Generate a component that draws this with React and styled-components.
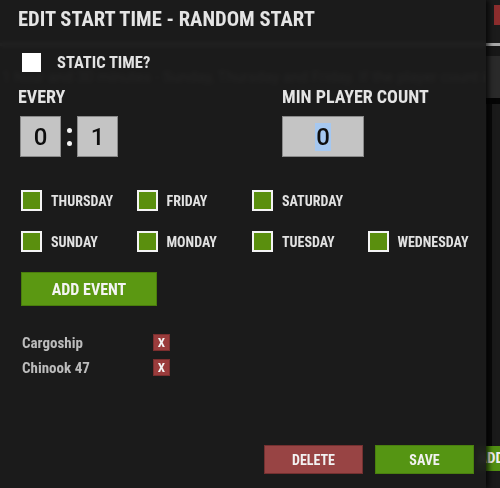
import React, { useState } from 'react';
import styled, { createGlobalStyle } from 'styled-components';

const GlobalStyle = createGlobalStyle`
    html, body {
        margin: 0;
        padding: 0;
        background: #151515;
    }
    * {
        box-sizing: border-box;
    }
`;

const FONT = `"Roboto Condensed", Roboto, "Liberation Sans", sans-serif`;

const DAY_ROWS = [
    ['THURSDAY', 'FRIDAY', 'SATURDAY'],
    ['SUNDAY', 'MONDAY', 'TUESDAY', 'WEDNESDAY'],
];

const EVENTS = ['Cargoship', 'Chinook 47'];

function App() {
    const [staticTime, setStaticTime] = useState(false);
    const [days, setDays] = useState(DAY_ROWS.flat());
    const [events, setEvents] = useState(EVENTS);

    const toggleDay = (day) => {
        setDays((prev) => (prev.includes(day) ? prev.filter((d) => d !== day) : [...prev, day]));
    };

    return (
        <Page>
            <GlobalStyle />
            <Backdrop>
                <BgTopBar>
                    <BgTab />
                </BgTopBar>
                <BgRule />
                <BgRow>
                    <BgText>1 hour and 30 minutes - Sunday, Thursday and Friday. If the player count is above 5</BgText>
                    <BgSide />
                </BgRow>
                <BgShadowBar />
                <BgFill />
                <BgFooter>
                    <BgButton>ADD</BgButton>
                </BgFooter>
            </Backdrop>

            <Modal>
                <Title>EDIT START TIME - RANDOM START</Title>

                <StaticRow onClick={() => setStaticTime(!staticTime)}>
                    <WhiteBox $checked={staticTime} />
                    <StaticLabel>STATIC TIME?</StaticLabel>
                </StaticRow>

                <Fields>
                    <Field>
                        <FieldLabel>EVERY</FieldLabel>
                        <TimeRow>
                            <TimeBox>0</TimeBox>
                            <Colon>
                                <Dot />
                                <Dot />
                            </Colon>
                            <TimeBox>1</TimeBox>
                        </TimeRow>
                    </Field>
                    <Field>
                        <FieldLabel>MIN PLAYER COUNT</FieldLabel>
                        <CountBox>
                            <Selected>0</Selected>
                        </CountBox>
                    </Field>
                </Fields>

                <DayGrid>
                    {DAY_ROWS.map((row) =>
                        row.map((day, i) => (
                            <DayItem key={day} $first={i === 0} onClick={() => toggleDay(day)}>
                                <DayBox $checked={days.includes(day)} />
                                <DayLabel>{day}</DayLabel>
                            </DayItem>
                        ))
                    )}
                </DayGrid>

                <AddButton>ADD EVENT</AddButton>

                <EventList>
                    {events.map((ev) => (
                        <React.Fragment key={ev}>
                            <EventName>{ev}</EventName>
                            <RemoveButton onClick={() => setEvents(events.filter((e) => e !== ev))}>X</RemoveButton>
                        </React.Fragment>
                    ))}
                </EventList>

                <Footer>
                    <ActionButton $variant="danger">DELETE</ActionButton>
                    <ActionButton>SAVE</ActionButton>
                </Footer>
            </Modal>
        </Page>
    );
}

export default App;

const Page = styled.div`
    position: relative;
    width: 500px;
    height: 488px;
    overflow: hidden;
    background: #171717;
    font-family: ${FONT};
`;

/* ---- page behind the dialog ---- */

const Backdrop = styled.div`
    display: flex;
    flex-direction: column;
    height: 100%;
`;

const BgTopBar = styled.div`
    height: 43px;
    display: flex;
    justify-content: flex-end;
    padding-top: 5px;
    background: #1b1b1b;
`;

const BgTab = styled.div`
    width: 6px;
    height: 20px;
    background: #8c2d2d;
`;

const BgRule = styled.div`
    height: 3px;
    background: #a9a9a9;
`;

const BgRow = styled.div`
    display: flex;
    align-items: center;
    height: 52px;
    padding-top: 9px;
`;

const BgText = styled.div`
    flex: 1;
    padding-left: 2px;
    color: #b4b4b4;
    font-family: Roboto, sans-serif;
    font-size: 15px;
    white-space: nowrap;
    overflow: hidden;
`;

const BgSide = styled.div`
    width: 14px;
    height: 42px;
    background: #2a2a2a;
`;

const BgShadowBar = styled.div`
    height: 6px;
    margin-left: 486px;
    background: #050505;
`;

const BgFill = styled.div`
    flex: 1;
    margin-left: 487px;
    border-left: 5px solid #090909;
    background: #1a1a1a;
`;

const BgFooter = styled.div`
    display: flex;
    justify-content: flex-end;
    height: 42px;
    background: #1a1a1a;
`;

const BgButton = styled.div`
    width: 40px;
    height: 25px;
    margin-right: -16px;
    padding-left: 2px;
    background: #518f12;
    color: #f0f0f0;
    font-size: 15px;
    font-weight: 700;
    line-height: 25px;
`;

/* ---- dialog ---- */

const Modal = styled.div`
    position: absolute;
    top: 0;
    left: 0;
    width: 486px;
    height: 488px;
    display: flex;
    flex-direction: column;
    padding: 7px 12px 14px 18px;
    background: rgba(27, 27, 27, 0.95);
    backdrop-filter: blur(2px);
    box-shadow: 3px 0 5px rgba(0, 0, 0, 0.7);
`;

const Title = styled.h1`
    margin: 0;
    color: #e4e4e4;
    font-size: 20.6px;
    font-weight: 700;
    line-height: 24px;
    white-space: nowrap;
`;

const StaticRow = styled.div`
    display: flex;
    align-items: center;
    gap: 16px;
    height: 19px;
    margin: 22px 0 0 4px;
    cursor: pointer;
`;

const WhiteBox = styled.div`
    width: 19px;
    height: 19px;
    background: ${(p) => (p.$checked ? '#5b9312' : '#ffffff')};
    border: 2px solid #ffffff;
`;

const StaticLabel = styled.span`
    color: #e2e2e2;
    font-size: 16.5px;
    font-weight: 700;
    line-height: 19px;
    white-space: nowrap;
`;

const Fields = styled.div`
    display: grid;
    grid-template-columns: 264px 1fr;
    margin-top: 14px;
`;

const Field = styled.div`
    display: flex;
    flex-direction: column;
    gap: 8px;
`;

const FieldLabel = styled.div`
    color: #e4e4e4;
    font-size: 18px;
    font-weight: 700;
    line-height: 22px;
`;

const TimeRow = styled.div`
    display: flex;
    align-items: center;
    margin-left: 2px;
`;

const TimeBox = styled.div`
    width: 41px;
    height: 41px;
    display: flex;
    align-items: center;
    justify-content: center;
    background: #c4c4c4;
    border: 1px solid #8a8a8a;
    color: #0e0e0e;
    font-family: Roboto, sans-serif;
    font-size: 24px;
    font-weight: 500;
`;

const Colon = styled.div`
    width: 16px;
    display: flex;
    flex-direction: column;
    align-items: center;
    gap: 8px;
`;

const Dot = styled.div`
    width: 5px;
    height: 5px;
    border-radius: 50%;
    background: #f2f2f2;
`;

const CountBox = styled(TimeBox)`
    width: 82px;
`;

const Selected = styled.span`
    padding: 0 1px;
    background: #a6c8f0;
    line-height: 28px;
`;

const DayGrid = styled.div`
    display: grid;
    grid-template-columns: repeat(4, 115.5px);
    row-gap: 20px;
    margin: 33px 0 0 3px;
`;

const DayItem = styled.div`
    grid-column: ${(p) => (p.$first ? '1' : 'auto')};
    display: flex;
    align-items: center;
    gap: 9px;
    height: 21px;
    cursor: pointer;
`;

const DayBox = styled.div`
    width: 21px;
    height: 21px;
    border: 2px solid #f4f4f4;
    background: ${(p) => (p.$checked ? '#5a8f0e' : 'transparent')};
`;

const DayLabel = styled.span`
    color: #e2e2e2;
    font-size: 14px;
    font-weight: 700;
    white-space: nowrap;
`;

const AddButton = styled.button`
    align-self: flex-start;
    width: 136px;
    height: 34px;
    margin: 20px 0 0 3px;
    border: 1px solid #4a7d0c;
    background: #5b9812;
    color: #f4f4f4;
    font-family: ${FONT};
    font-size: 16px;
    font-weight: 700;
    cursor: pointer;
`;

const EventList = styled.div`
    display: grid;
    grid-template-columns: 131px 17px;
    grid-auto-rows: 17px;
    row-gap: 8px;
    align-items: center;
    margin: 28px 0 0 4px;
`;

const EventName = styled.span`
    color: #bcbcbc;
    font-size: 15px;
    font-weight: 700;
`;

const RemoveButton = styled.button`
    width: 17px;
    height: 17px;
    padding: 0;
    border: 1px solid #7a2e2e;
    background: #9a3c3c;
    color: #f4f4f4;
    font-family: ${FONT};
    font-size: 13px;
    font-weight: 700;
    line-height: 15px;
    cursor: pointer;
`;

const Footer = styled.div`
    display: flex;
    justify-content: flex-end;
    gap: 12px;
    margin-top: auto;
`;

const ActionButton = styled.button`
    width: 99px;
    height: 29px;
    border: 1px solid ${(p) => (p.$variant === 'danger' ? '#743030' : '#4a800e')};
    background: ${(p) => (p.$variant === 'danger' ? '#984444' : '#559513')};
    color: #f2f2f2;
    font-family: ${FONT};
    font-size: 14px;
    font-weight: 700;
    cursor: pointer;
`;
